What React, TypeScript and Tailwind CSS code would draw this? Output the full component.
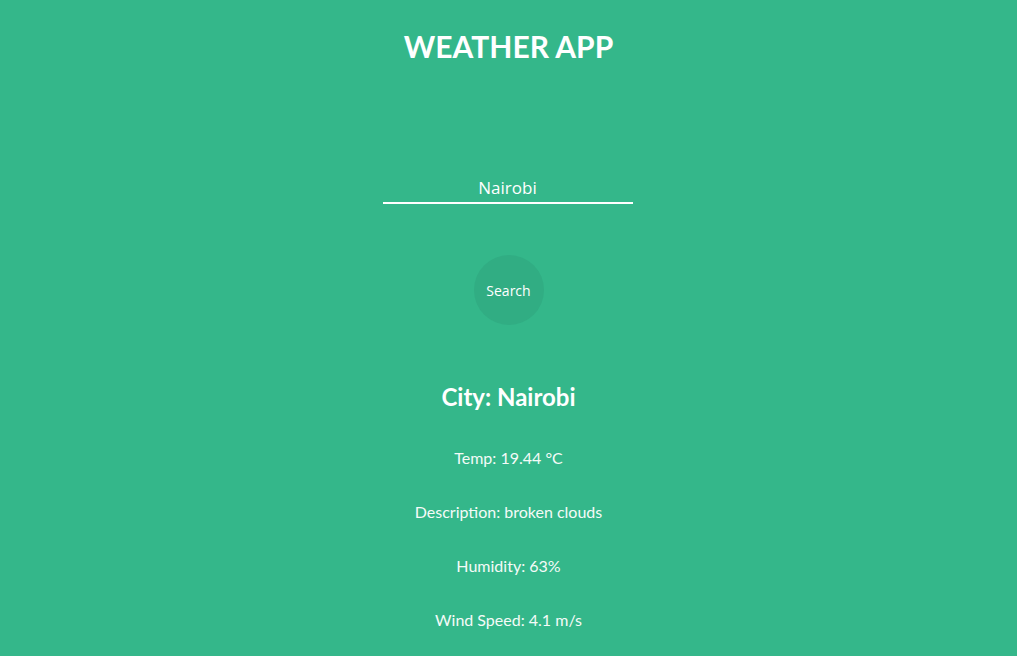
import { useState } from 'react'

const details = [
  'Temp: 19.44 °C',
  'Description: broken clouds',
  'Humidity: 63%',
  'Wind Speed: 4.1 m/s'
]

export default function App() {
  const [city, setCity] = useState('Nairobi')

  return (
    <div className="flex min-h-screen flex-col items-center bg-[#34b78a] font-['Lato',sans-serif] text-white">
      <h1 className="mt-[28px] text-[30px] leading-[36px] font-bold">WEATHER APP</h1>

      <input
        value={city}
        onChange={(e) => setCity(e.target.value)}
        className="mt-[110px] ml-[-2px] h-[30px] w-[250px] border-b-2 border-white bg-transparent pb-[2px] text-center font-['Open_Sans',sans-serif] text-[17px] text-white outline-none"
      />

      <button className="mt-[51px] size-[70px] rounded-full bg-[#31ad83] font-['Open_Sans',sans-serif] text-[14px] text-white">
        Search
      </button>

      <h2 className="mt-[57px] text-[24px] leading-[29px] font-bold">City: {city}</h2>

      <div className="mt-[37px] flex flex-col items-center gap-[35px]">
        {details.map((d) => (
          <p key={d} className="text-[16px] leading-[19px] text-[#f4fbf8]">
            {d}
          </p>
        ))}
      </div>
    </div>
  )
}
